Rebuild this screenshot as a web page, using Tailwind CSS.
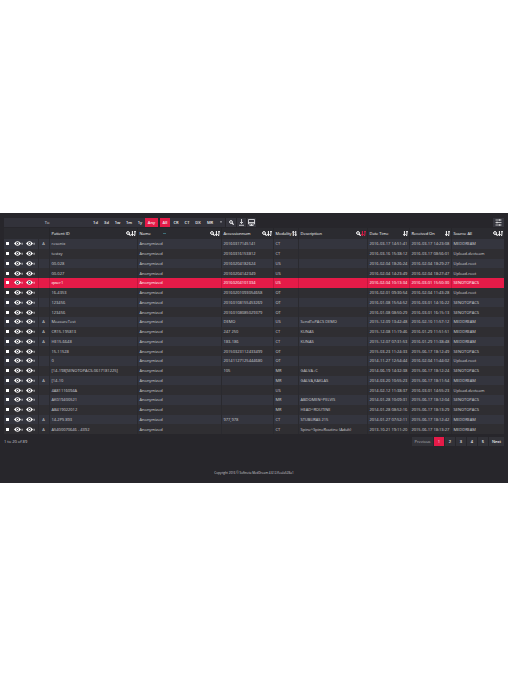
<!DOCTYPE html>
<html lang="en">
<head>
    <meta charset="UTF-8">
    <meta name="viewport" content="width=device-width, initial-scale=1.0">
    <title>MedDream</title>
    <script src="https://cdn.jsdelivr.net/npm/@tailwindcss/browser@4"></script>
</head>
<body class="bg-white min-h-screen flex flex-col justify-center font-['Open_Sans','Noto_Sans',sans-serif] text-[4px] leading-[9px] text-[#cfcfd3]">
    <!-- icons shared by the toolbar and the table -->
    <svg class="hidden">
        <symbol id="search" viewBox="0 0 10 10">
            <circle cx="4" cy="4" r="2.8" fill="none" stroke="currentColor" stroke-width="2"/>
            <path d="M6 6l3.3 3.3" stroke="currentColor" stroke-width="2.4"/>
        </symbol>
        <symbol id="sort" viewBox="0 0 10 10">
            <path d="M2.8 0v9M.4 6.4l2.4 3L5.2 6.4" fill="none" stroke="currentColor" stroke-width="2"/>
            <path d="M6 1.2h4M6 3.8h3.6M6 6.4h3M6 9h2.4" stroke="currentColor" stroke-width="1.8"/>
        </symbol>
        <symbol id="updown" viewBox="0 0 10 10">
            <path d="M2.5 10V1M.5 3l2-2.4 2 2.4M7.5 0v9M5.5 7l2 2.4 2-2.4" fill="none" stroke="currentColor" stroke-width="2"/>
        </symbol>
        <symbol id="eye" viewBox="0 0 18 10">
            <path d="M0 5q7-9 14 0q-7 9-14 0z" fill="currentColor"/>
            <circle cx="7" cy="5" r="2.8" fill="#2f2f36"/>
            <circle cx="7" cy="5" r="1.4" fill="currentColor"/>
            <path d="M15 3.5h2.5v4H15z" fill="currentColor" opacity=".6"/>
        </symbol>
    </svg>

    <div class="bg-[#27262b] px-1 pt-1 pb-2">
        <div class="flex items-center h-[10px]">
            <input type="text" aria-label="Study date" placeholder="To" class="w-[86px] h-[9px] bg-[#32323a] text-center placeholder:text-[#e0e0e4]">
            <div class="flex text-[#f0f0f2] font-semibold">
                <button class="w-[11px] h-[9px] bg-[#32323a]">1d</button>
                <button class="w-[11px] h-[9px] bg-[#32323a]">3d</button>
                <button class="w-[11px] h-[9px] bg-[#32323a]">1w</button>
                <button class="w-[12px] h-[9px] bg-[#32323a]">1m</button>
                <button class="w-[10px] h-[9px] bg-[#32323a]">1y</button>
                <button class="w-[13px] h-[9px] bg-[#e51b48]">Any</button>
            </div>
            <div class="flex ml-[2px] text-[#f0f0f2] font-semibold">
                <button class="w-[10px] h-[9px] bg-[#e51b48]">All</button>
                <button class="w-[12px] h-[9px] bg-[#32323a]">CR</button>
                <button class="w-[10px] h-[9px] bg-[#32323a]">CT</button>
                <button class="w-[12px] h-[9px] bg-[#32323a]">DX</button>
                <button class="w-[12px] h-[9px] bg-[#32323a]">MR</button>
                <button aria-label="More modalities" class="w-[9px] h-[9px] bg-[#32323a] flex items-center justify-center">
                    <svg class="size-[2px]" viewBox="0 0 10 10"><path d="M0 2h10L5 9z" fill="currentColor"/></svg>
                </button>
            </div>
            <div class="flex gap-px ml-px text-[#f0f0f2]">
                <button aria-label="Search" class="w-[10px] h-[9px] bg-[#36363e] flex items-center justify-center">
                    <svg class="size-[5px]"><use href="#search"/></svg>
                </button>
                <button aria-label="Download" class="w-[9px] h-[9px] bg-[#36363e] flex items-center justify-center">
                    <svg class="size-[7px]" viewBox="0 0 14 14" fill="none" stroke="currentColor" stroke-width="1.6"><path d="M7 0v9M4 6l3 3 3-3M2 12.500h10"/></svg>
                </button>
                <button aria-label="Viewer" class="w-[9px] h-[9px] bg-[#36363e] flex items-center justify-center">
                    <svg class="size-[7px]" viewBox="0 0 14 14" fill="none" stroke="currentColor" stroke-width="1.6"><path d="M1 1h12v9H1zM1 7h12M7 10v3M3 13h8"/></svg>
                </button>
            </div>
            <button aria-label="Settings" class="ml-auto w-[11px] h-[9px] bg-[#36363e] text-[#f0f0f2] flex items-center justify-center">
                <svg class="size-[7px]" viewBox="0 0 14 14" stroke="currentColor" stroke-width="1.4"><path d="M1 2h12M1 7h12M1 12h12M9.500 0v4M4 5v4M9.500 10v4"/></svg>
            </button>
        </div>

        <table class="table-fixed w-full h-[206px] mt-px border-collapse text-left whitespace-nowrap">
            <colgroup>
                <col class="w-[34px]">
                <col class="w-[11px]">
                <col class="w-[88px]">
                <col class="w-[84px]">
                <col class="w-[52px]">
                <col class="w-[25px]">
                <col class="w-[69px]">
                <col class="w-[42px]">
                <col class="w-[42px]">
                <col class="w-[53px]">
            </colgroup>
            <thead class="bg-[#2b2b30] text-white">
                <tr id="head" class="h-[11px]"></tr>
            </thead>
            <tbody id="studies"></tbody>
        </table>

        <div class="flex items-center justify-between mt-[3px]">
            <p>1 to 20 of 89</p>
            <nav class="flex gap-px text-[#f0f0f2] text-center" aria-label="Pages">
                <button class="w-[21px] h-[9px] bg-[#323238] text-[#b4b4ba]">Previous</button>
                <button class="w-[10px] h-[9px] bg-[#e51b48]">1</button>
                <button class="w-[10px] h-[9px] bg-[#323238] font-semibold">2</button>
                <button class="w-[10px] h-[9px] bg-[#323238] font-semibold">3</button>
                <button class="w-[10px] h-[9px] bg-[#323238] font-semibold">4</button>
                <button class="w-[10px] h-[9px] bg-[#323238] font-semibold">5</button>
                <button class="w-[15px] h-[9px] bg-[#323238] font-semibold">Next</button>
            </nav>
        </div>

        <footer class="mt-[25px] text-center text-[3px] leading-[4px]">Copyright 2016 © Softneta MedDream 4.612-f(ea)a528a1</footer>
    </div>

    <script>
        const columns = [
            ['Patient ID', 'search sort'],
            ['Name', 'search sort'],
            ['Accessionnum', 'search sort'],
            ['Modality', 'updown'],
            ['Description', 'search sort'],
            ['Date Time', 'sort'],
            ['Received On', 'sort'],
            ['Source AE', 'search sort']
        ];

        // flag, patient id, accession number, modality, description, date time, received on, source
        const studies = [
            ['A', 'resonix', '20160317145141', 'CT', '', '2016-03-17 14:51:41', '2016-03-17 14:23:08', 'MEDDREAM'],
            ['', 'testxy', '20160316153812', 'CT', '', '2016-03-16 15:38:12', '2016-03-17 08:56:01', 'Upload-devteam'],
            ['', '00-028', '20160204182624', 'US', '', '2016-02-04 18:26:24', '2016-02-04 18:29:27', 'Upload-root'],
            ['', '00-027', '20160204142349', 'US', '', '2016-02-04 14:23:49', '2016-02-04 18:27:47', 'Upload-root'],
            ['', 'qwer1', '20160204101334', 'US', '', '2016-02-04 10:13:34', '2016-03-01 15:50:30', 'SENOTOPACS'],
            ['', '16-4353', '20160201093054658', 'OT', '', '2016-02-01 09:30:54', '2016-02-04 11:43:28', 'Upload-root'],
            ['', '123456', '20160108155453269', 'OT', '', '2016-01-08 15:54:52', '2016-03-01 14:16:22', 'SENOTOPACS'],
            ['', '123456', '20160108085029379', 'OT', '', '2016-01-08 08:50:29', '2016-03-01 16:15:13', 'SENOTOPACS'],
            ['A', 'MeasureTest', 'DEMO', 'US', 'SendToPACS DEMO', '2015-12-09 13:42:48', '2016-02-10 11:57:12', 'MEDDREAM'],
            ['A', 'CR15-195813', '247 250', 'CT', 'KUNAS', '2015-12-08 11:19:46', '2016-01-29 11:51:51', 'MEDDREAM'],
            ['A', 'HE15-6648', '183-186', 'CT', 'KUNAS', '2015-12-07 07:31:53', '2016-01-29 11:38:48', 'MEDDREAM'],
            ['', '15-11528', '20150323112433499', 'OT', '', '2015-03-23 11:24:33', '2015-06-17 18:12:49', 'SENOTOPACS'],
            ['', '0', '20141127125444680', 'OT', '', '2014-11-27 12:54:44', '2016-02-04 11:44:02', 'Upload-root'],
            ['', '[14-198[SENOTOPACS-0617181225]', '105', 'MR', 'GALVA+C', '2014-06-19 14:32:38', '2015-06-17 18:12:24', 'SENOTOPACS'],
            ['A', '[14-10', '', 'MR', 'GALVA,KAKLAS', '2014-03-20 10:55:23', '2015-06-17 18:11:54', 'MEDDREAM'],
            ['', '4A81116094A', '', 'US', '', '2014-02-12 11:38:37', '2016-03-01 14:55:23', 'Upload-devteam'],
            ['', 'AK019400521', '', 'MR', 'ABDOMEN^PELVIS', '2014-01-28 10:09:31', '2015-06-17 18:12:04', 'SENOTOPACS'],
            ['', 'AB419022012', '', 'MR', 'HEAD^ROUTINE', '2014-01-28 08:52:16', '2015-06-17 18:13:29', 'SENOTOPACS'],
            ['A', '14-2PS 893', '977,978', 'CT', 'STUBURAS 215', '2014-01-27 07:52:11', '2015-06-17 18:12:42', 'MEDDREAM'],
            ['A', 'A5400070646 - 4392', '', 'CT', 'Spine^SpineRoutine (Adult)', '2013-10-21 19:11:20', '2015-06-17 18:13:27', 'MEDDREAM']
        ];

        const icon = (name, color) => `<svg class="size-[5px] shrink-0 ${color}"><use href="#${name}"/></svg>`;

        document.getElementById('head').innerHTML = '<th></th><th></th>' + columns.map(([label, icons]) => {
            const list = icons.split(' ').map(name =>
                icon(name, label === 'Description' && name === 'sort' ? 'text-[#e51b48]' : 'text-white')).join('');
            const mark = label === 'Name' ? '<span class="w-[3px] h-px ml-3 mr-auto bg-[#3f6f78]"></span>' : '';
            return `<th class="py-0 pl-[2px] pr-px font-normal border-l border-[#26262a]">
                <span class="flex items-center justify-between"><span>${label}</span>${mark}<span class="flex">${list}</span></span></th>`;
        }).join('');

        document.getElementById('studies').innerHTML = studies.map(([flag, id, ...rest], i) => {
            const selected = i === 4;
            const color = selected ? 'bg-[#e51b48] text-white' : i % 2 ? 'bg-[#2f2e32]' : 'bg-[#34353e]';
            const line = selected ? 'border-[#c5173e]' : 'border-[#2a2a2f]';
            const cells = [id, 'Anonymized', ...rest].map(text =>
                `<td class="py-0 pl-[2px] border-l ${line}">${text}</td>`).join('');
            return `<tr class="${color}">
                <td class="p-0"><span class="flex items-center pl-[2px] text-white">
                    <input type="checkbox" aria-label="Select ${id}" class="appearance-none size-[3px] bg-white">
                    <svg class="w-[9px] h-[5px] ml-[5px]"><use href="#eye"/></svg>
                    <svg class="w-[9px] h-[5px] ml-[3px]"><use href="#eye"/></svg>
                </span></td>
                <td class="p-0 text-center border-l ${line}">${flag}</td>${cells}</tr>`;
        }).join('');
    </script>
</body>
</html>
